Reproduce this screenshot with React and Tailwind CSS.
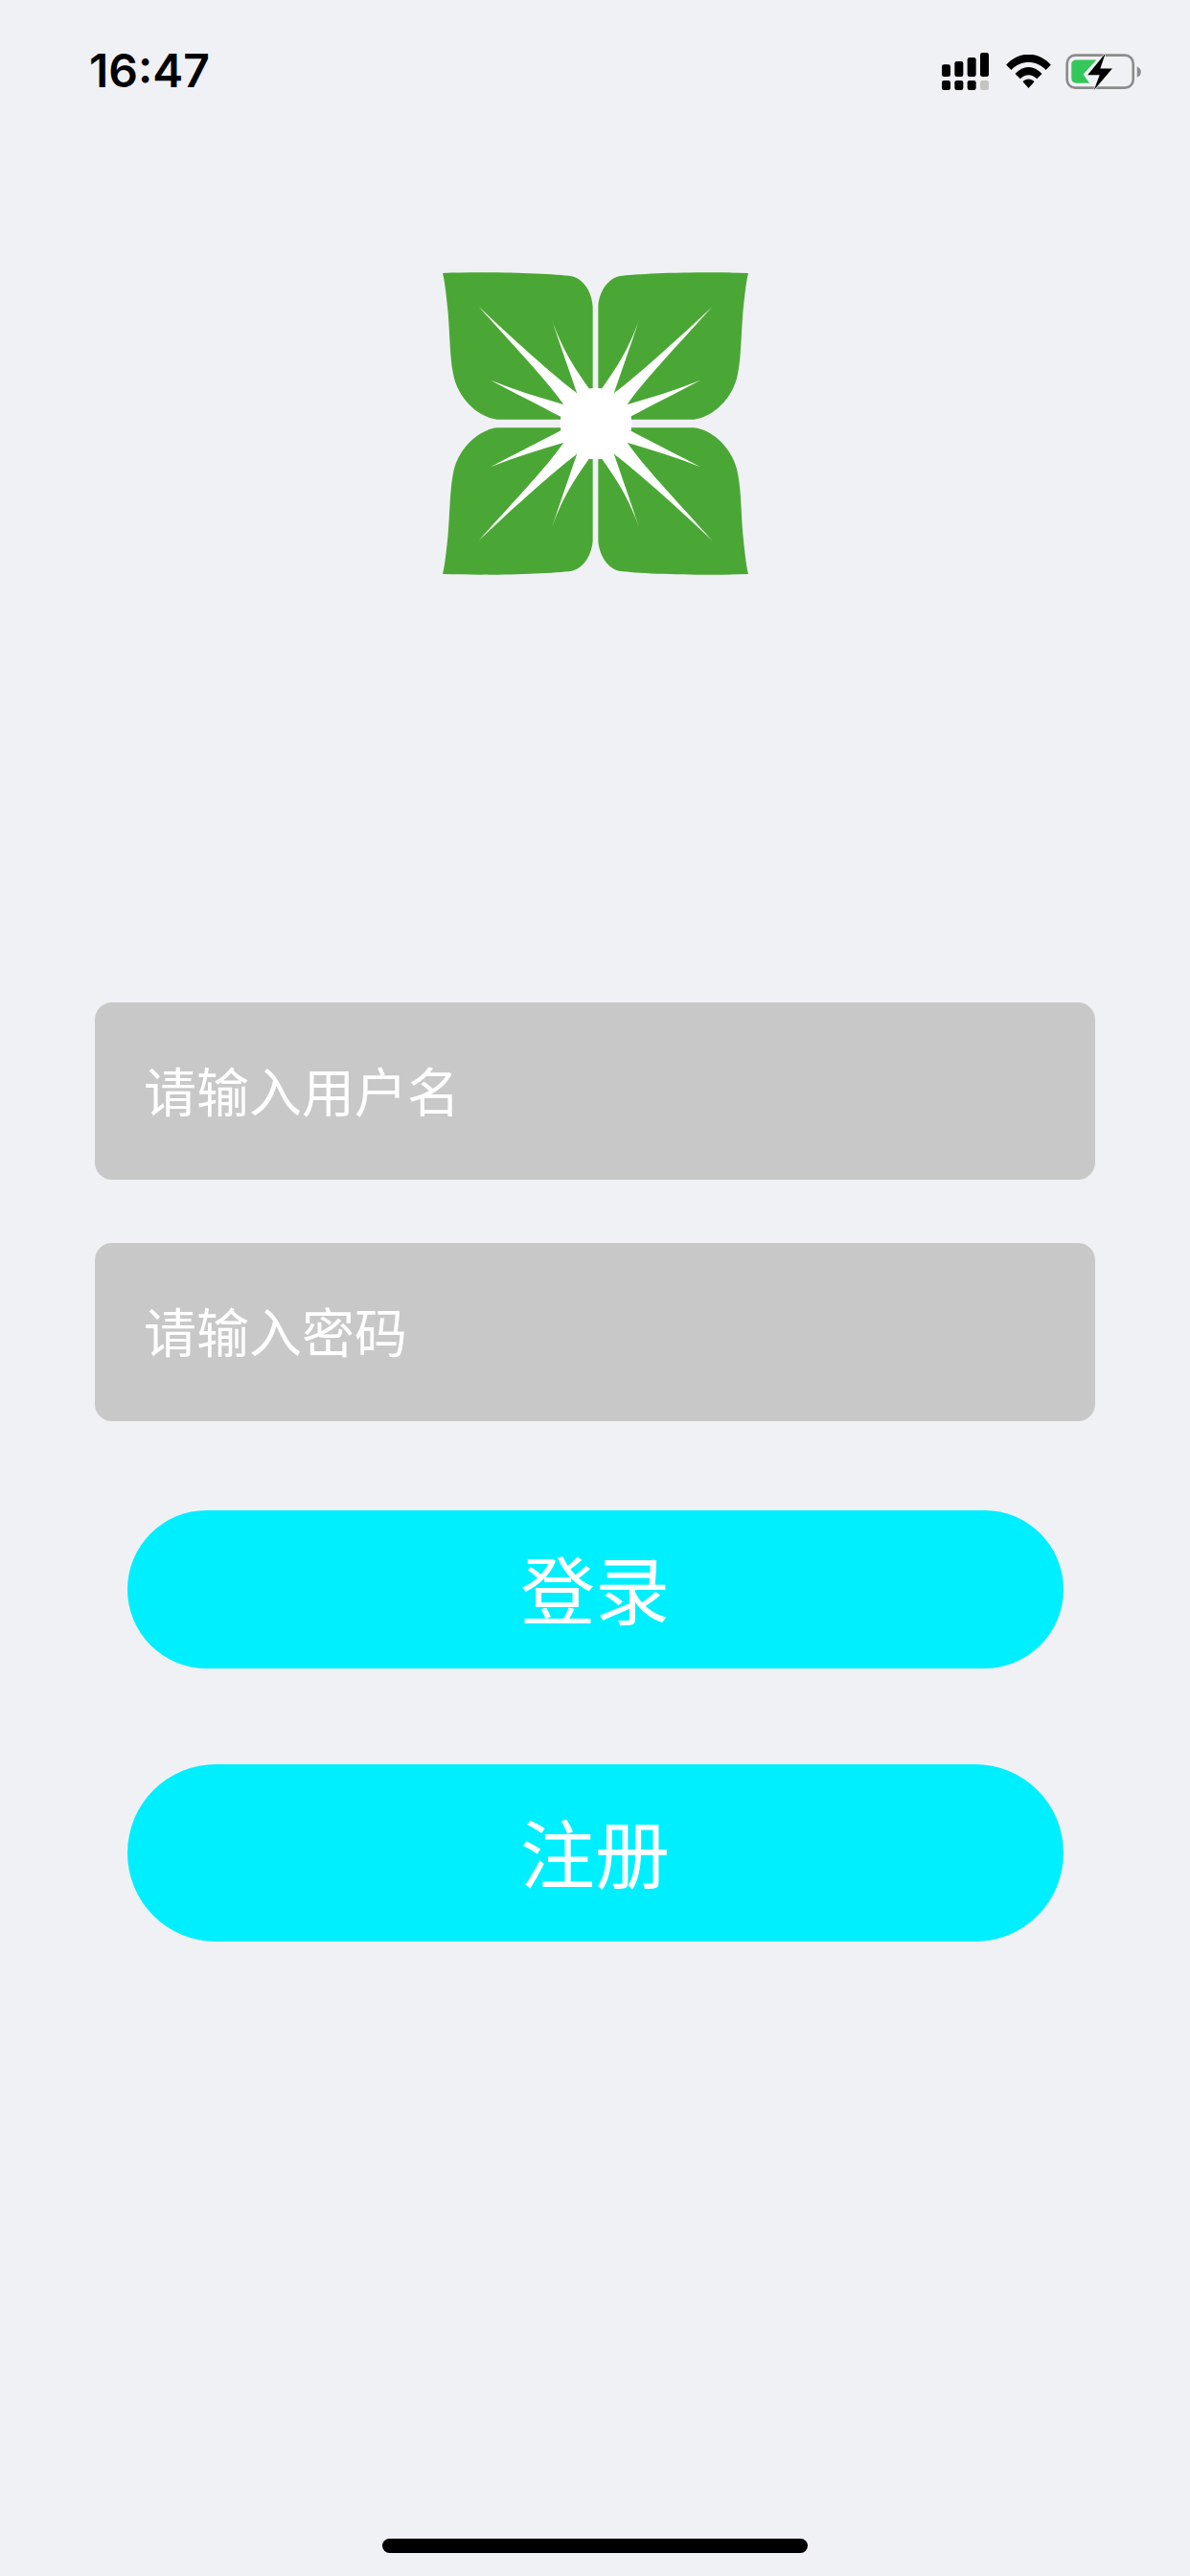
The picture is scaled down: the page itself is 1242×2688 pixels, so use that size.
const LEAF = 'M65 45 C200 40 400 45 470 55 C510 65 533 110 535 150 L535 503 L235 503 C170 495 110 430 98 360 C88 310 88 250 82 170 C78 130 72 70 65 45 Z';

function Quadrant({ transform }) {
  return (
    <g transform={transform}>
      <path d={LEAF} fill="#4ba735" />
      <path d="M178 150 C300 265 420 372 482 418 L545 516 L445 458 C400 390 290 275 178 150 Z" fill="#fff" />
      <path d="M406 188 C440 285 480 345 525 408 L545 516 L487 425 C465 360 440 290 406 188 Z" fill="#fff" />
      <path d="M215 380 C290 410 370 435 450 458 L545 516 L436 495 C370 460 290 420 215 380 Z" fill="#fff" />
    </g>
  );
}

function Logo() {
  return (
    <svg viewBox="65 42 957 948" className="w-[319px] h-[316px] blur-[0.7px]">
      <Quadrant />
      <Quadrant transform="matrix(-1 0 0 1 1087 0)" />
      <Quadrant transform="matrix(1 0 0 -1 0 1032)" />
      <Quadrant transform="matrix(-1 0 0 -1 1087 1032)" />
      <circle cx="545" cy="516" r="112" fill="#fff" />
    </svg>
  );
}

function SignalIcon() {
  return (
    <svg viewBox="128 75 147 117" className="w-[49px] h-[39px]" fill="#000">
      <rect x="128" y="112" width="27" height="38" rx="7" />
      <rect x="168" y="102" width="27" height="48" rx="7" />
      <rect x="208" y="90" width="27" height="60" rx="7" />
      <rect x="248" y="75" width="27" height="75" rx="7" />
      <rect x="128" y="162" width="27" height="30" rx="7" />
      <rect x="168" y="162" width="27" height="30" rx="7" />
      <rect x="208" y="162" width="27" height="30" rx="7" />
      <rect x="248" y="162" width="27" height="30" rx="7" fill="#c4c4c4" />
    </svg>
  );
}

function WifiIcon() {
  return (
    <svg viewBox="330 80 140 105" className="w-[47px] h-[35px] ml-[18px]" fill="#000">
      <path d="M330 112 C370 68 430 68 470 112 L454 128 C424 96 376 96 346 128 Z" />
      <path d="M358 140 C384 112 416 112 442 140 L426 156 C410 140 390 140 374 156 Z" />
      <path d="M382 165 C392 154 408 154 418 165 L400 185 Z" />
    </svg>
  );
}

function BatteryIcon() {
  return (
    <svg viewBox="515 72 240 118" className="w-[80px] h-[39px] ml-[15px]">
      <rect x="519" y="80" width="209" height="103" rx="26" fill="none" stroke="#8c8c8c" strokeWidth="8" />
      <path d="M740 115 C750 120 754 128 752 135 C752 142 748 147 740 150 Z" fill="#8c8c8c" />
      <path d="M548 95 L612 95 L570 140 L590 168 L548 168 C538 168 533 162 533 154 L533 108 C533 100 540 95 548 95 Z" fill="#34c759" />
      <path d="M640 74 L584 142 L622 142 L604 190 L662 122 L624 122 Z" fill="#000" stroke="#f0f1f5" strokeWidth="4" paintOrder="stroke" />
    </svg>
  );
}

export default function App() {
  const cjk = "font-['Noto_Sans_CJK_SC','Liberation_Sans',sans-serif]";

  return (
    <div className={`min-h-[2688px] bg-[#f0f1f5] flex flex-col items-center ${cjk}`}>
      <div className="w-full h-[148px] pl-[93px] pr-[50px] flex items-center justify-between">
        <span className="font-['Inter',sans-serif] font-semibold text-[48px] leading-none text-black">16:47</span>
        <div className="flex items-center">
          <SignalIcon />
          <WifiIcon />
          <BatteryIcon />
        </div>
      </div>

      <div className="mt-[136px]">
        <Logo />
      </div>

      <div className="mt-[446px] w-[1044px] h-[185px] rounded-[18px] bg-[#c8c8c8] flex items-center pl-[51px] pb-[5px] text-[55px] leading-none text-white">
        请输入用户名
      </div>
      <div className="mt-[66px] w-[1044px] h-[186px] rounded-[18px] bg-[#c8c8c8] flex items-center pl-[51px] pb-[5px] text-[55px] leading-none text-white">
        请输入密码
      </div>

      <button className="mt-[93px] w-[977px] h-[165px] pb-[5px] rounded-full bg-[#00efff] text-white text-[78px] leading-none">
        登录
      </button>
      <button className="mt-[100px] w-[977px] h-[185px] pb-[5px] rounded-full bg-[#00efff] text-white text-[78px] leading-none">
        注册
      </button>

      <div className="mt-auto mb-[24px] w-[444px] h-[15px] rounded-full bg-black" />
    </div>
  );
}
